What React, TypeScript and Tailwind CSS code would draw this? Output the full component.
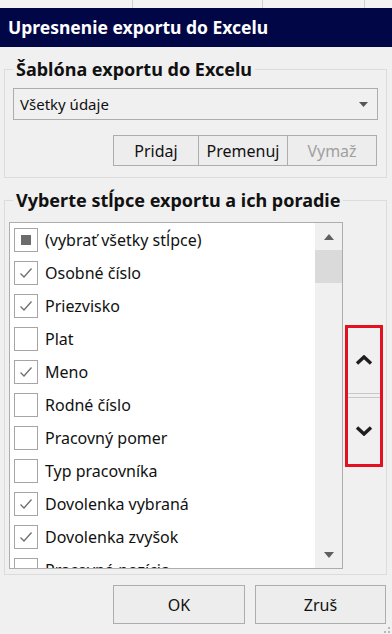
const font = { fontFamily: '"Noto Sans", "Open Sans", sans-serif' };

const columns = [
    { label: '(vybrať všetky stĺpce)', state: 'partial' },
    { label: 'Osobné číslo', state: 'on' },
    { label: 'Priezvisko', state: 'on' },
    { label: 'Plat', state: 'off' },
    { label: 'Meno', state: 'on' },
    { label: 'Rodné číslo', state: 'off' },
    { label: 'Pracovný pomer', state: 'off' },
    { label: 'Typ pracovníka', state: 'off' },
    { label: 'Dovolenka vybraná', state: 'on' },
    { label: 'Dovolenka zvyšok', state: 'on' },
    { label: 'Pracovná pozícia', state: 'off' },
];

function CheckBox({ state }: { state: string }) {
    return (
        <div className="w-[24px] h-[24px] shrink-0 border border-[#a5a5a5] bg-white flex items-center justify-center">
            {state === 'on' && (
                <svg width="16" height="16" viewBox="0 0 16 16">
                    <path d="M2.5 8.5 L6 12 L13.5 3.5" fill="none" stroke="#6e6e6e" strokeWidth="1.3" />
                </svg>
            )}
            {state === 'partial' && <div className="w-[10px] h-[10px] bg-[#6b6b6b]" />}
        </div>
    );
}

function Chevron({ up }: { up?: boolean }) {
    return (
        <svg width="18" height="10" viewBox="0 0 18 10">
            <path
                d={up ? 'M2 8.5 L9 2 L16 8.5' : 'M2 1.5 L9 8 L16 1.5'}
                fill="none"
                stroke="#1e1e1e"
                strokeWidth="3.4"
                strokeLinejoin="miter"
            />
        </svg>
    );
}

export default function App() {
    return (
        <div className="w-[392px] h-[634px] bg-[#f0f0f0] flex flex-col overflow-hidden relative" style={font}>
            {/* window strip above */}
            <div className="h-[8px] flex bg-[#f3f3f3]">
                <div className="w-[133px] border-r border-[#d0d0d0]" />
                <div className="w-[130px] border-r border-[#d0d0d0]" />
                <div className="w-[102px] border-r border-[#d0d0d0]" />
            </div>

            {/* Title bar */}
            <div className="h-[39px] bg-[#010647] flex items-center px-[8px]">
                <span className="text-white font-bold text-[17.5px] leading-none">Upresnenie exportu do Excelu</span>
            </div>

            <div className="flex flex-col pl-[4px] pr-[5px] pt-[10px]">
                {/* Template group */}
                <fieldset className="border border-[#dcdcdc] px-[8px] pb-[11px]">
                    <legend className="px-[3px] text-[18px] font-bold text-[#111] leading-[24px]">Šablóna exportu do Excelu</legend>
                    <div className="mt-[7px] h-[32px] border border-[#adadad] bg-[#f0f0f0] flex items-center justify-between pl-[6px] pr-[9px]">
                        <span className="text-[15px] text-[#111]">Všetky údaje</span>
                        <svg width="9" height="5" viewBox="0 0 9 5">
                            <path d="M0 0 H9 L4.5 5 Z" fill="#555" />
                        </svg>
                    </div>
                    <div className="mt-[15px] flex justify-end pr-[1px]">
                        <button className="w-[86px] h-[31px] border border-[#adadad] bg-[#ededed] text-[16px] text-[#111]">Pridaj</button>
                        <button className="w-[89px] h-[31px] border border-l-0 border-[#adadad] bg-[#ededed] text-[16px] text-[#111]">Premenuj</button>
                        <button className="w-[89px] h-[31px] border border-l-0 border-[#adadad] bg-[#ededed] text-[16px] text-[#a0a0a0]">Vymaž</button>
                    </div>
                </fieldset>

                {/* Columns group */}
                <fieldset className="mt-[10px] border border-[#dcdcdc] pl-[4px] pr-[1px] pb-[5px]">
                    <legend className="ml-[4px] px-[3px] text-[18px] font-bold text-[#111] leading-[24px]">Vyberte stĺpce exportu a ich poradie</legend>
                    <div className="mt-[10px] flex">
                        <div className="w-[334px] h-[347px] border border-[#adadad] bg-white flex overflow-hidden">
                            <div className="flex-1 flex flex-col pl-[4px] overflow-hidden">
                                {columns.map((c) => (
                                    <div key={c.label} className="h-[33px] shrink-0 flex items-center gap-[7px]">
                                        <CheckBox state={c.state} />
                                        <span className="text-[16px] text-[#111] whitespace-nowrap">{c.label}</span>
                                    </div>
                                ))}
                            </div>
                            {/* scrollbar */}
                            <div className="w-[27px] bg-[#f0f0f0] flex flex-col items-center">
                                <div className="h-[27px] flex items-center justify-center">
                                    <svg width="10" height="6" viewBox="0 0 10 6">
                                        <path d="M0 6 L5 0 L10 6 Z" fill="#606060" />
                                    </svg>
                                </div>
                                <div className="w-full h-[33px] bg-[#dadada]" />
                                <div className="flex-1" />
                                <div className="h-[27px] flex items-center justify-center">
                                    <svg width="10" height="6" viewBox="0 0 10 6">
                                        <path d="M0 0 L10 0 L5 6 Z" fill="#606060" />
                                    </svg>
                                </div>
                            </div>
                        </div>

                        {/* order buttons */}
                        <div className="flex-1 flex items-center justify-center">
                            <div className="w-[38px] h-[142px] border-[3px] border-[#e5101f] flex flex-col">
                                <div className="flex-1 border-b border-[#c8c8c8] flex items-center justify-center">
                                    <Chevron up />
                                </div>
                                <div className="flex-1 border-t border-[#c8c8c8] mt-[3px] flex items-center justify-center">
                                    <Chevron />
                                </div>
                            </div>
                        </div>
                    </div>
                </fieldset>

                {/* Dialog buttons */}
                <div className="mt-[10px] flex justify-end gap-[10px] pr-[1px]">
                    <button className="w-[132px] h-[39px] border border-[#adadad] bg-[#ededed] text-[16px] text-[#111]">OK</button>
                    <button className="w-[131px] h-[39px] border border-[#adadad] bg-[#ededed] text-[16px] text-[#111]">Zruš</button>
                </div>
            </div>

            {/* resize grip */}
            <div className="absolute right-[2px] bottom-[1px] grid grid-cols-2 gap-[2px]">
                <div className="w-[2px] h-[2px]" />
                <div className="w-[2px] h-[2px] bg-[#b8b8b8]" />
                <div className="w-[2px] h-[2px] bg-[#b8b8b8]" />
                <div className="w-[2px] h-[2px] bg-[#b8b8b8]" />
            </div>
        </div>
    );
}
